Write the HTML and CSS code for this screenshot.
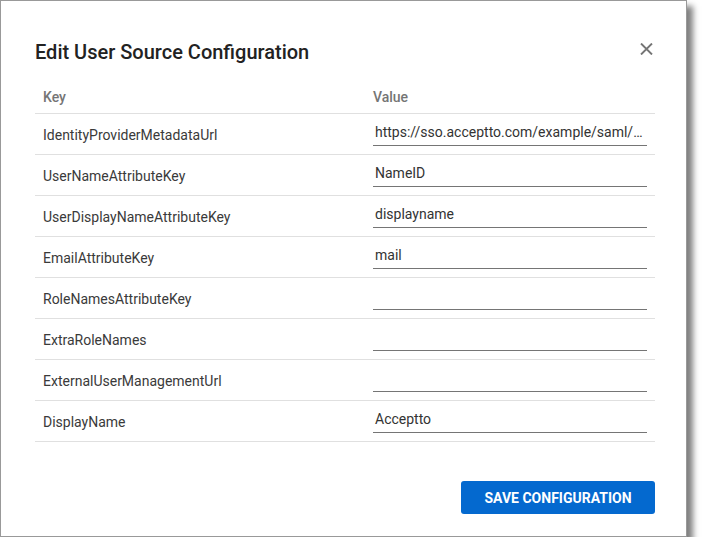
FILE: index.html
```html
<!DOCTYPE html>
<html>
	<head>
		<meta charset="utf-8" />
		<title>Edit User Source Configuration</title>
		<link rel="stylesheet" href="styles.css">
	</head>
	<body>
		<div class="dialog">
			<div class="dialog-head">
				<h1>Edit User Source Configuration</h1>
				<button class="close" type="button" title="Close">
					<svg width="13" height="12" viewBox="0 0 13 12">
						<path d="M1 0.5 L12 11.5 M12 0.5 L1 11.5" stroke="#757575" stroke-width="1.9" fill="none" />
					</svg>
				</button>
			</div>

			<div class="grid">
				<div class="row head">
					<div class="key">Key</div>
					<div class="val">Value</div>
				</div>
				<div class="row">
					<div class="key">IdentityProviderMetadataUrl</div>
					<div class="val"><div class="field">https://sso.acceptto.com/example/saml/…</div></div>
				</div>
				<div class="row">
					<div class="key">UserNameAttributeKey</div>
					<div class="val"><div class="field">NameID</div></div>
				</div>
				<div class="row">
					<div class="key">UserDisplayNameAttributeKey</div>
					<div class="val"><div class="field">displayname</div></div>
				</div>
				<div class="row">
					<div class="key">EmailAttributeKey</div>
					<div class="val"><div class="field">mail</div></div>
				</div>
				<div class="row">
					<div class="key">RoleNamesAttributeKey</div>
					<div class="val"><div class="field"></div></div>
				</div>
				<div class="row">
					<div class="key">ExtraRoleNames</div>
					<div class="val"><div class="field"></div></div>
				</div>
				<div class="row">
					<div class="key">ExternalUserManagementUrl</div>
					<div class="val"><div class="field"></div></div>
				</div>
				<div class="row">
					<div class="key">DisplayName</div>
					<div class="val"><div class="field">Acceptto</div></div>
				</div>
			</div>

			<div class="actions">
				<button class="save" type="button">Save Configuration</button>
			</div>
		</div>
	</body>
</html>
```

FILE: styles.css
```css
body {
	margin: 0;
	background: #fff;
	font-family: Roboto, "Liberation Sans", sans-serif;
	color: #333;
}

.dialog {
	width: 620px;
	height: 496px;
	padding: 39px 31px 0 34px;
	border: 1px solid #999;
	background: #fff;
	box-shadow: 6px 6px 6px rgba(0, 0, 0, 0.5);
}

.dialog-head {
	display: flex;
	justify-content: space-between;
	align-items: flex-start;
	height: 41px;
}

h1 {
	margin: 0;
	font-size: 20px;
	line-height: 24px;
	font-weight: 500;
	color: #222;
}

.close {
	border: 0;
	padding: 0;
	margin: 3px 2px 0 0;
	background: none;
	width: 13px;
	height: 12px;
	display: block;
}

.close svg {
	display: block;
}

.row {
	display: flex;
	align-items: center;
	height: 40px;
	border-bottom: 1px solid #e0e0e0;
	font-size: 14px;
}

.row.head {
	height: 32px;
	font-weight: 500;
	color: #757575;
}

.key {
	width: 314px;
	padding: 2px 8px 0;
	color: #3a3a3a;
}

.row.head .key {
	padding-top: 0;
	color: #757575;
}

.val {
	flex: 1;
	padding: 0 8px;
}

.field {
	height: 20px;
	line-height: 20px;
	padding: 0 2px 3px;
	border-bottom: 1px solid #757575;
	white-space: nowrap;
	overflow: hidden;
}

.actions {
	display: flex;
	justify-content: flex-end;
	margin-top: 39px;
}

.save {
	width: 194px;
	height: 33px;
	border: 0;
	border-radius: 3px;
	background: #0469cf;
	color: #fff;
	font-family: Roboto, "Liberation Sans", sans-serif;
	font-size: 14px;
	font-weight: 700;
	text-transform: uppercase;
}
```
